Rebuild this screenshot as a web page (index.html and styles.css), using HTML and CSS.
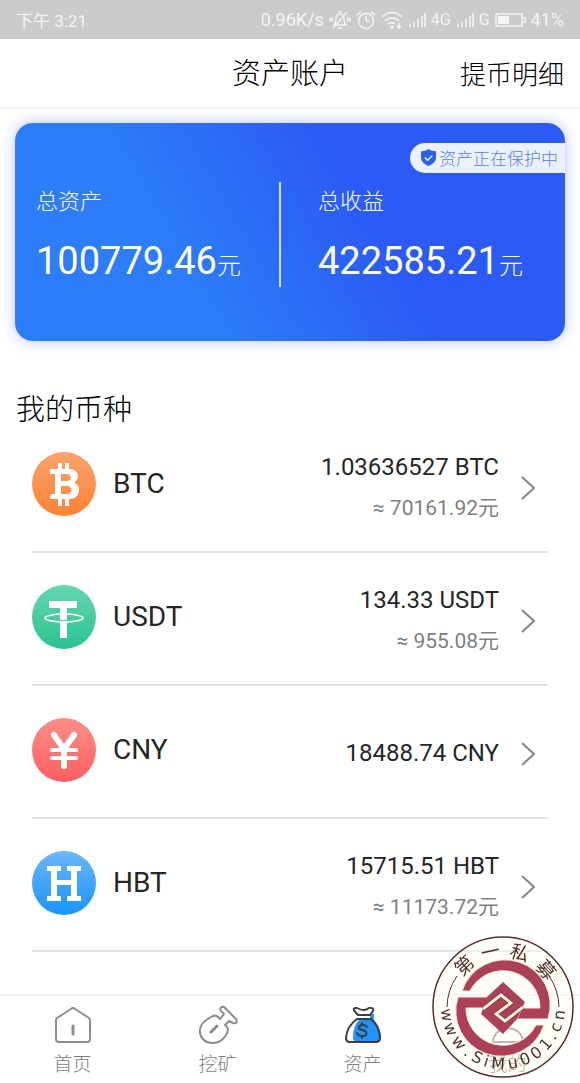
FILE: index.html
```html
<!DOCTYPE html>
<html lang="zh-CN">
<head>
    <meta charset="UTF-8">
    <meta name="viewport" content="width=device-width, initial-scale=1.0">
    <title>资产账户</title>
    <link rel="stylesheet" href="styles.css">
</head>
<body>
    <div class="status-bar">
        <span class="status-time">下午 3:21</span>
        <div class="status-icons">
            <span>0.96K/s</span>
            <svg width="22" height="20" viewBox="0 0 22 20" fill="none" stroke="currentColor" stroke-width="1.5">
                <path d="M5 15c2-2 2-4 2-6 0-3 2-5 4-5s4 2 4 5c0 2 0 4 2 6zM9 17c1 2 3 2 4 0M10 3c0-2 2-2 2 0M4 18L18 2M3 7v5M1 8v3M19 7v5M21 8v3"/>
            </svg>
            <svg width="20" height="20" viewBox="0 0 20 20" fill="none" stroke="currentColor" stroke-width="1.6">
                <circle cx="10" cy="11" r="7.5"/><path d="M10 6v5h4M1 5l4-3M19 5l-4-3"/>
            </svg>
            <svg width="22" height="20" viewBox="0 0 22 20" fill="none" stroke="currentColor" stroke-width="1.7">
                <path d="M1 7c6-6 14-6 20 0M4 11c4-4 10-4 14 0M7 14c3-2 5-2 7 0"/><circle cx="11" cy="17" r="1" fill="currentColor"/><path d="M18 13v5M16 16l2 2 2-2"/>
            </svg>
            <svg width="18" height="20" viewBox="0 0 18 20" fill="none" stroke="currentColor" stroke-width="1.6">
                <path d="M2 17v-3M6 17v-5M10 17V9M14 17V6M17 17V3"/>
            </svg>
            <span class="status-net">4G</span>
            <svg width="18" height="20" viewBox="0 0 18 20" fill="none" stroke="currentColor" stroke-width="1.6">
                <path d="M2 17v-3M6 17v-5M10 17V9M14 17V6M17 17V3"/>
            </svg>
            <span class="status-net">G</span>
            <svg width="31" height="20" viewBox="0 0 31 20" fill="none" stroke="currentColor" stroke-width="1.5">
                <path d="M1 4h26v12H1zM28 8h2v4h-2"/><path d="M3 6h11v8H3z" fill="currentColor" stroke="none"/>
            </svg>
            <span>41%</span>
        </div>
    </div>

    <header class="page-header">
        <h1>资产账户</h1>
        <a href="#records">提币明细</a>
    </header>

    <main class="content">
        <section class="asset-card">
            <div class="protect-badge">
                <svg width="15" height="17" viewBox="0 0 16 18">
                    <path d="M8 0c2 2 5 2 8 2.500V9c0 4-3 7-8 9-5-2-8-5-8-9V2.500C3 2 6 2 8 0z" fill="#2b5fe8"/>
                    <path d="M4 9l3 3 5-5" fill="none" stroke="#fff" stroke-width="1.500"/>
                </svg>
                <span>资产正在保护中</span>
            </div>
            <div class="asset-total">
                <p class="asset-label">总资产</p>
                <p class="asset-value">100779.46<small>元</small></p>
            </div>
            <div class="asset-total asset-income">
                <p class="asset-label">总收益</p>
                <p class="asset-value">422585.21<small>元</small></p>
            </div>
        </section>

        <h2>我的币种</h2>
        <ul class="coin-list">
            <li>
                <a class="coin" href="#btc">
                    <svg class="coin-icon" viewBox="0 0 64 64">
                        <defs><linearGradient id="btc" x2="0" y2="1"><stop stop-color="#fca36c"/><stop offset="1" stop-color="#fd8134"/></linearGradient></defs>
                        <circle cx="32" cy="32" r="32" fill="url(#btc)"/>
                        <path d="M28 11v9M35 11v9M28 45v9M35 45v9" stroke="#fff" stroke-width="4"/>
                        <path fill="#fff" fill-rule="evenodd" d="M18 17h19c6 0 9 3 9 7 0 3-2 5-4 7 4 1 5 4 5 7 0 6-4 9-10 9H18l1-5h4V22h-5zM29 22v7h6c5 0 5-7 0-7zM29 34v8h6c6 0 6-8 0-8z"/>
                    </svg>
                    <span class="coin-name">BTC</span>
                    <span class="coin-amount"><span>1.03636527 BTC</span><small>≈ 70161.92元</small></span>
                    <svg class="arrow" viewBox="0 0 16 26"><path d="M2 2l12 11L2 24"/></svg>
                </a>
            </li>
            <li>
                <a class="coin" href="#usdt">
                    <svg class="coin-icon" viewBox="0 0 64 64">
                        <defs><linearGradient id="usdt" x2="0" y2="1"><stop stop-color="#66d5b1"/><stop offset="1" stop-color="#2ac393"/></linearGradient></defs>
                        <circle cx="32" cy="32" r="32" fill="url(#usdt)"/>
                        <path d="M17 16h28v7H35v30h-7V23H17z" fill="#fff"/>
                        <ellipse cx="32" cy="33" rx="19" ry="4" fill="none" stroke="#fff" stroke-width="1.500"/>
                        <path d="M28 35q4 1 7 0" fill="none" stroke="#42cb9f" stroke-width="1"/>
                    </svg>
                    <span class="coin-name">USDT</span>
                    <span class="coin-amount"><span>134.33 USDT</span><small>≈ 955.08元</small></span>
                    <svg class="arrow" viewBox="0 0 16 26"><path d="M2 2l12 11L2 24"/></svg>
                </a>
            </li>
            <li>
                <a class="coin" href="#cny">
                    <svg class="coin-icon" viewBox="0 0 64 64">
                        <defs><linearGradient id="cny" x2="0" y2="1"><stop stop-color="#fd8e85"/><stop offset="1" stop-color="#fb5f60"/></linearGradient></defs>
                        <circle cx="32" cy="32" r="32" fill="url(#cny)"/>
                        <path d="M22 17l10 14 10-14M32 31v17" fill="none" stroke="#fff" stroke-linecap="round" stroke-linejoin="round" stroke-width="6"/>
                        <path d="M20 32h24M20 40h24" stroke="#fff" stroke-linecap="round" stroke-width="4"/>
                    </svg>
                    <span class="coin-name">CNY</span>
                    <span class="coin-amount"><span>18488.74 CNY</span></span>
                    <svg class="arrow" viewBox="0 0 16 26"><path d="M2 2l12 11L2 24"/></svg>
                </a>
            </li>
            <li>
                <a class="coin" href="#hbt">
                    <svg class="coin-icon" viewBox="0 0 64 64">
                        <defs><linearGradient id="hbt" x2="0" y2="1"><stop stop-color="#6bb6fc"/><stop offset="1" stop-color="#1895fc"/></linearGradient></defs>
                        <circle cx="32" cy="32" r="32" fill="url(#hbt)"/>
                        <path fill="#fff" d="M15 15h14v5h-4v9h14v-9h-4v-5h14v5h-4v25h4v5H35v-5h4V34H25v11h4v5H15v-5h4V20h-4z"/>
                    </svg>
                    <span class="coin-name">HBT</span>
                    <span class="coin-amount"><span>15715.51 HBT</span><small>≈ 11173.72元</small></span>
                    <svg class="arrow" viewBox="0 0 16 26"><path d="M2 2l12 11L2 24"/></svg>
                </a>
            </li>
        </ul>
    </main>

    <nav class="tab-bar">
        <a href="#home">
            <svg viewBox="0 0 40 40"><path d="M20 3q1 0 2 1l14 9q1 1 1 2v19q0 3-3 3H6q-3 0-3-3V15q0-1 1-2l14-9q1-1 2-1z"/><path d="M20 21v8" stroke-width="3"/></svg>
            <span>首页</span>
        </a>
        <a href="#mining">
            <svg viewBox="0 0 40 40"><path d="M13 12c3-2 5-2 7 0l2 2 4-5-3-3c-2-3 1-5 3-4l12 12c2 3 0 5-3 4l-4-2-4 4 2 2c2 3 1 5-1 8-3 5-7 8-13 8C6 38 1 32 2 24c1-6 6-9 11-12z"/><path d="M13 27l6-6" stroke-width="3"/></svg>
            <span>挖矿</span>
        </a>
        <a href="#assets">
            <svg viewBox="0 0 40 40">
                <path d="M27 9h4v6q7 9 7 18 0 4-4 4H16q-5 0-6-3 0-14 6-19h11z" fill="#1f94fb" stroke="none"/>
                <g stroke="#3b3d42" stroke-width="2">
                    <path d="M15 10q-8-8-1-7 7 4 12 0 8-1 1 7zM14 14h14q9 8 9 19 0 4-4 4H7q-4 0-4-4 1-12 11-19z"/>
                    <path d="M24 22q-2-3-5-2c-4 1-4 4 0 5 6 1 6 6 0 6q-4 0-5-3M19 18v2M19 31v2"/>
                </g>
            </svg>
            <span>资产</span>
        </a>
        <a href="#mine">
            <svg viewBox="0 0 40 40"><circle cx="20" cy="11" r="8"/><path d="M5 36c2-17 28-17 30 0q0 1-1 1H6q-1 0-1-1z"/></svg>
            <span>我的</span>
        </a>
    </nav>

    <!-- seal, drawn around its own centre -->
    <svg class="seal" viewBox="-71 -71 142 142">
        <circle r="70" fill="#fffef0" fill-opacity=".4" stroke="#532f2b" stroke-width="1.500"/>
        <path d="M-56 0A56 56 0 0 1-46-31M56 0A56 56 0 0 0 46-31" fill="none" stroke="#532f2b"/>
        <g fill="#ad4059" stroke="#fbf3d2" stroke-width="1">
            <path d="M-41-16A44 44 0 1 1 45 12H14L19 1H37A37 37 0 0 0-33-16z"/>
            <path d="M41 18A44 44 0 1 1-45-10H-14L-19 1H-37A37 37 0 0 0 33 18z"/>
        </g>
        <path d="M0-25L22-5 14 12 0 27-22 7-16-10z" fill="#ad4059"/>
        <path d="M-20 2L-2-12 8-4-7 7 2 14 20 0" fill="none" stroke="#4d2024" stroke-width="4"/>
        <path d="M-20 2L-2-12 8-4-7 7 2 14 20 0" fill="none" stroke="#fbf3d2" stroke-width="3"/>
        <g class="seal-top">
            <text transform="rotate(-43)" y="-50">第</text>
            <text transform="rotate(-13)" y="-50">一</text>
            <text transform="rotate(17)" y="-50">私</text>
            <text transform="rotate(49)" y="-50">募</text>
        </g>
        <g class="seal-url">
            <text transform="rotate(82)" y="62">w</text>
            <text transform="rotate(67)" y="62">w</text>
            <text transform="rotate(51)" y="62">w</text>
            <text transform="rotate(38)" y="62">.</text>
            <text transform="rotate(27)" y="62">S</text>
            <text transform="rotate(17)" y="62">i</text>
            <text transform="rotate(5)" y="62">M</text>
            <text transform="rotate(-10)" y="62">u</text>
            <text transform="rotate(-23)" y="62">0</text>
            <text transform="rotate(-36)" y="62">0</text>
            <text transform="rotate(-49)" y="62">1</text>
            <text transform="rotate(-59)" y="62">.</text>
            <text transform="rotate(-69)" y="62">c</text>
            <text transform="rotate(-82)" y="62">n</text>
        </g>
    </svg>
</body>
</html>
```

FILE: styles.css
```css
* {
    box-sizing: border-box;
}
body {
    display: flex;
    flex-direction: column;
    min-height: 100vh;
    margin: 0;
    background-color: #fff;
    color: #000;
    font-family: Roboto, "Noto Sans CJK SC", sans-serif;
}
h1, h2, p, ul {
    margin: 0;
    padding: 0;
    font-weight: 300;
}
a {
    color: inherit;
    text-decoration: none;
}
.status-bar {
    display: flex;
    justify-content: space-between;
    align-items: center;
    height: 39px;
    padding: 0 16px;
    background-color: #cbcbcb;
    color: #f4f4f4;
    font-size: 18px;
}
.status-time {
    font-size: 17px;
}
.status-icons {
    display: flex;
    align-items: center;
    gap: 5px;
}
.status-net {
    font-size: 16px;
}
.page-header {
    display: grid;
    grid-template-columns: 1fr auto 1fr;
    align-items: center;
    height: 70px;
    padding: 0 16px 4px;
    border-bottom: 2px solid #f2f2f7;
}
.page-header h1 {
    grid-column: 2;
    font-size: 29px;
}
.page-header a {
    justify-self: end;
    padding-top: 2px;
    font-size: 26px;
    font-weight: 300;
}
.content {
    flex: 1;
    padding: 14px 15px 0;
}
.asset-card {
    position: relative;
    display: flex;
    height: 218px;
    padding-top: 59px;
    border-radius: 18px;
    background: linear-gradient(60deg, #2c7df7 30%, #2b5af5 64%);
    box-shadow: 0 0 14px rgba(70, 100, 245, 0.4);
    color: #fff;
}
.protect-badge {
    position: absolute;
    top: 20px;
    right: 0;
    display: flex;
    align-items: center;
    gap: 3px;
    height: 30px;
    padding: 0 7px 2px 11px;
    border-radius: 15px 0 0 15px;
    background-color: #ebf0fd;
    color: #5a80de;
    font-size: 17px;
    font-weight: 300;
}
.asset-total {
    width: 48%;
    height: 105px;
    padding-left: 21px;
}
.asset-income {
    width: 52%;
    padding-left: 37px;
    border-left: 2px solid #cfdcfd;
}
.asset-label {
    font-size: 22px;
    line-height: 40px;
}
.asset-value {
    font-size: 38px;
    font-weight: 400;
    line-height: 78px;
    white-space: nowrap;
}
.asset-value small {
    font-size: 24px;
    font-weight: 300;
}
h2 {
    margin-top: 59px;
    padding-left: 1px;
    font-size: 29px;
    line-height: 20px;
}
.coin-list {
    padding: 0 17px;
    list-style: none;
}
.coin {
    display: flex;
    align-items: center;
    height: 133px;
    padding-bottom: 4px;
    border-bottom: 2px solid #e2e2e2;
    color: #262626;
    font-weight: 400;
}
.coin-icon {
    width: 64px;
    height: 64px;
}
.coin-name {
    margin-left: 17px;
    font-size: 28px;
}
.coin-amount {
    display: flex;
    flex-direction: column;
    align-items: flex-end;
    margin-left: auto;
    padding-top: 8px;
    font-size: 24px;
    line-height: 41px;
}
.coin-amount small {
    color: #808080;
    font-size: 21px;
}
.arrow {
    width: 16px;
    height: 26px;
    margin: 8px 12px 0 21px;
    fill: none;
    stroke: #858585;
    stroke-width: 2;
}
.tab-bar {
    display: flex;
    height: 89px;
    border-top: 2px solid #eee;
}
.tab-bar a {
    flex: 1;
    display: flex;
    flex-direction: column;
    align-items: center;
    gap: 4px;
    padding-top: 9px;
    color: #7d7d7d;
    font-size: 19px;
    font-weight: 300;
}
.tab-bar svg {
    width: 40px;
    height: 40px;
    fill: none;
    stroke: #8c8c8c;
    stroke-width: 2;
    stroke-linecap: round;
    stroke-linejoin: round;
}
.seal {
    position: fixed;
    right: 6px;
    bottom: 5px;
    width: 142px;
    height: 142px;
    fill: #532f2b;
    text-anchor: middle;
}
.seal-top {
    font-size: 19px;
}
.seal-url {
    font-family: "DejaVu Sans", sans-serif;
    font-size: 16px;
}
```
